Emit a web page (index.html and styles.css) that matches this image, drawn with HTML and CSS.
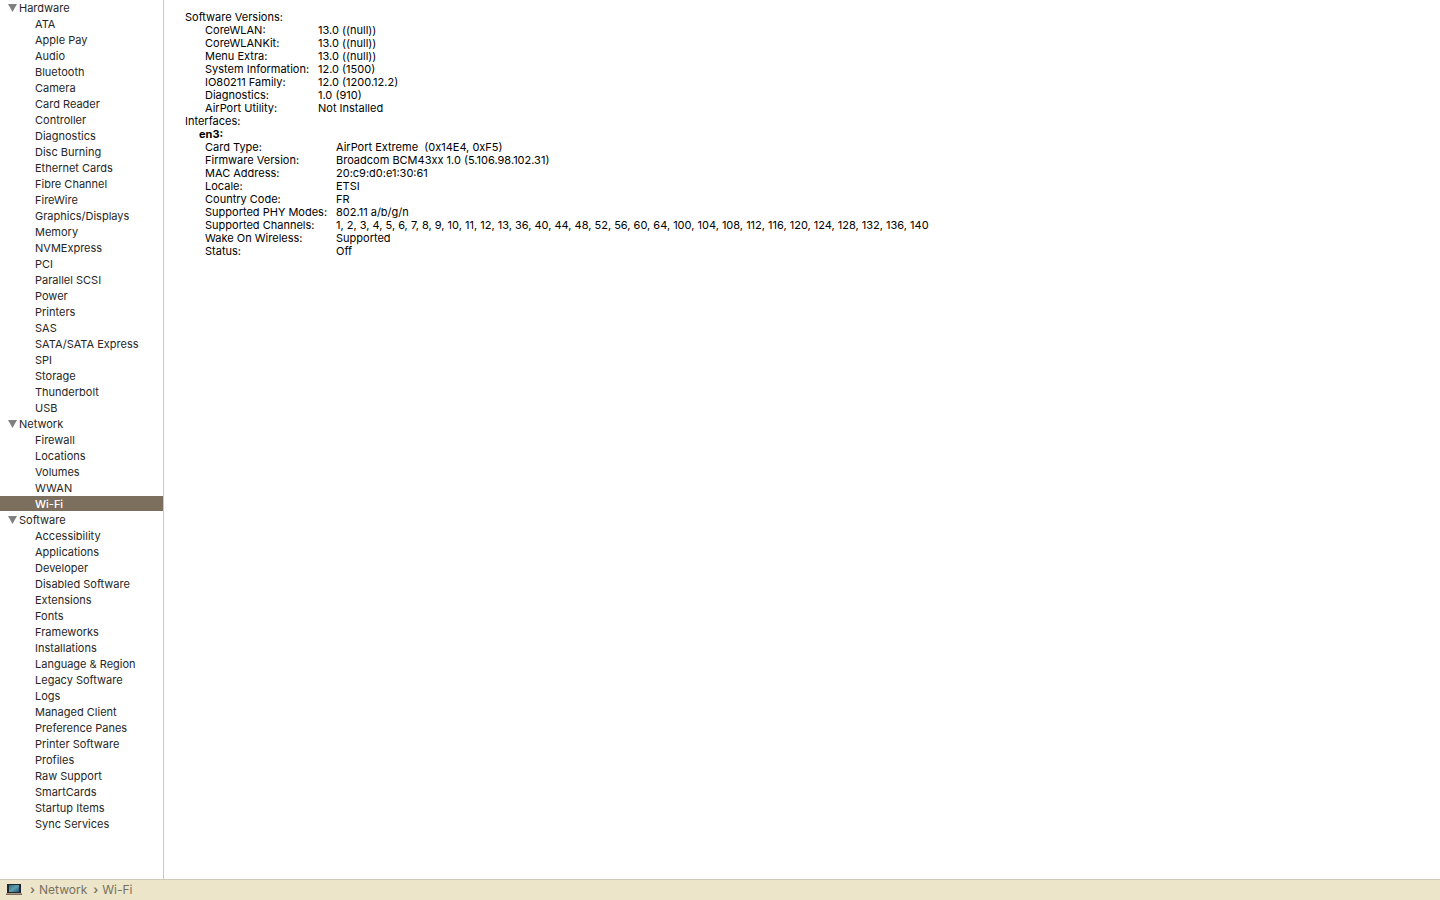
FILE: index.html
```html
<!DOCTYPE html>
<html lang="en">
<head>
    <meta charset="UTF-8">
    <meta name="viewport" content="width=device-width, initial-scale=1.0">
    <title>System Information</title>
    <link rel="stylesheet" href="styles.css">
</head>
<body>
    <div class="main">
        <nav class="sidebar">
            <button type="button" class="group"><svg class="arrow" viewBox="0 0 18 16"><path d="M0 0h18L9 16z"/></svg>Hardware</button>
            <a href="#">ATA</a>
            <a href="#">Apple Pay</a>
            <a href="#">Audio</a>
            <a href="#">Bluetooth</a>
            <a href="#">Camera</a>
            <a href="#">Card Reader</a>
            <a href="#">Controller</a>
            <a href="#">Diagnostics</a>
            <a href="#">Disc Burning</a>
            <a href="#">Ethernet Cards</a>
            <a href="#">Fibre Channel</a>
            <a href="#">FireWire</a>
            <a href="#">Graphics/Displays</a>
            <a href="#">Memory</a>
            <a href="#">NVMExpress</a>
            <a href="#">PCI</a>
            <a href="#">Parallel SCSI</a>
            <a href="#">Power</a>
            <a href="#">Printers</a>
            <a href="#">SAS</a>
            <a href="#">SATA/SATA Express</a>
            <a href="#">SPI</a>
            <a href="#">Storage</a>
            <a href="#">Thunderbolt</a>
            <a href="#">USB</a>
            <button type="button" class="group"><svg class="arrow" viewBox="0 0 18 16"><path d="M0 0h18L9 16z"/></svg>Network</button>
            <a href="#">Firewall</a>
            <a href="#">Locations</a>
            <a href="#">Volumes</a>
            <a href="#">WWAN</a>
            <a href="#" class="selected">Wi-Fi</a>
            <button type="button" class="group"><svg class="arrow" viewBox="0 0 18 16"><path d="M0 0h18L9 16z"/></svg>Software</button>
            <a href="#">Accessibility</a>
            <a href="#">Applications</a>
            <a href="#">Developer</a>
            <a href="#">Disabled Software</a>
            <a href="#">Extensions</a>
            <a href="#">Fonts</a>
            <a href="#">Frameworks</a>
            <a href="#">Installations</a>
            <a href="#">Language &amp; Region</a>
            <a href="#">Legacy Software</a>
            <a href="#">Logs</a>
            <a href="#">Managed Client</a>
            <a href="#">Preference Panes</a>
            <a href="#">Printer Software</a>
            <a href="#">Profiles</a>
            <a href="#">Raw Support</a>
            <a href="#">SmartCards</a>
            <a href="#">Startup Items</a>
            <a href="#">Sync Services</a>
        </nav>

        <main class="details">
            <div>Software Versions:</div>
            <table class="versions">
                <tr><th scope="row">CoreWLAN:</th><td>13.0 ((null))</td></tr>
                <tr><th scope="row">CoreWLANKit:</th><td>13.0 ((null))</td></tr>
                <tr><th scope="row">Menu Extra:</th><td>13.0 ((null))</td></tr>
                <tr><th scope="row">System Information:</th><td>12.0 (1500)</td></tr>
                <tr><th scope="row">IO80211 Family:</th><td>12.0 (1200.12.2)</td></tr>
                <tr><th scope="row">Diagnostics:</th><td>1.0 (910)</td></tr>
                <tr><th scope="row">AirPort Utility:</th><td>Not Installed</td></tr>
            </table>
            <div>Interfaces:</div>
            <div class="interface">en3:</div>
            <table class="interfaces">
                <tr><th scope="row">Card Type:</th><td>AirPort Extreme&nbsp; (0x14E4, 0xF5)</td></tr>
                <tr><th scope="row">Firmware Version:</th><td>Broadcom BCM43xx 1.0 (5.106.98.102.31)</td></tr>
                <tr><th scope="row">MAC Address:</th><td>20:c9:d0:e1:30:61</td></tr>
                <tr><th scope="row">Locale:</th><td>ETSI</td></tr>
                <tr><th scope="row">Country Code:</th><td>FR</td></tr>
                <tr><th scope="row">Supported PHY Modes:</th><td>802.11 a/b/g/n</td></tr>
                <tr><th scope="row">Supported Channels:</th><td>1, 2, 3, 4, 5, 6, 7, 8, 9, 10, 11, 12, 13, 36, 40, 44, 48, 52, 56, 60, 64, 100, 104, 108, 112, 116, 120, 124, 128, 132, 136, 140</td></tr>
                <tr><th scope="row">Wake On Wireless:</th><td>Supported</td></tr>
                <tr><th scope="row">Status:</th><td>Off</td></tr>
            </table>
        </main>
    </div>

    <footer class="pathbar">
        <svg class="computer" viewBox="0 0 16 12">
            <defs>
                <linearGradient id="screen" x1="0" y1="0" x2="1" y2="1">
                    <stop offset="0" stop-color="#2f6a8c"/>
                    <stop offset="0.5" stop-color="#5c9fac"/>
                    <stop offset="1" stop-color="#1f557c"/>
                </linearGradient>
            </defs>
            <path fill="#23262b" d="M1 0h14v9H1z"/>
            <path fill="url(#screen)" d="M3 1h10v7H3z"/>
            <path fill="#a89a86" d="M0 9h16v2H0z"/>
            <path fill="#7a6c5c" d="M0 10h16v1H0z"/>
        </svg>
        <span class="chevron">›</span>
        <a href="#">Network</a>
        <span class="chevron">›</span>
        <a href="#">Wi-Fi</a>
    </footer>
</body>
</html>
```

FILE: styles.css
```css
body {
    display: flex;
    flex-direction: column;
    min-height: 100vh;
    margin: 0;
    background-color: #fff;
    color: #000;
    font-family: Inter, sans-serif;
    font-size: 11px;
}
a {
    color: inherit;
    text-decoration: none;
}
.main {
    display: flex;
    flex: 1;
}
.sidebar {
    box-sizing: border-box;
    width: 164px;
    flex-shrink: 0;
    border-right: 1px solid #d0c9b8;
    color: #262626;
}
.sidebar a {
    display: block;
    padding-left: 35px;
    line-height: 16px;
}
.sidebar .selected {
    height: 15px;
    margin-bottom: 1px;
    background-color: #7c6f5d;
    color: #fff;
    font-weight: 500;
}
.group {
    display: flex;
    align-items: center;
    gap: 2px;
    width: 100%;
    height: 16px;
    padding: 0 0 0 8px;
    border: none;
    background: none;
    color: inherit;
    font: inherit;
}
.arrow {
    width: 9px;
    height: 8px;
    fill: #808080;
}
.details {
    flex: 1;
    padding: 11px 21px;
    line-height: 13px;
}
table {
    margin-left: 20px;
    border-collapse: collapse;
}
th {
    padding: 0;
    font-weight: normal;
    text-align: left;
}
td {
    padding: 0;
}
.versions th {
    width: 113px;
}
.interfaces th {
    width: 131px;
}
.interface {
    margin-left: 14px;
    font-weight: bold;
}
.pathbar {
    display: flex;
    align-items: center;
    height: 20px;
    padding-left: 6px;
    border-top: 1px solid #d0c9b8;
    background-color: #ece5c9;
    color: #77715f;
    font-size: 12px;
    line-height: 18px;
}
.computer {
    width: 16px;
    height: 12px;
    margin-right: 8px;
}
.chevron {
    width: 9px;
    font-weight: 600;
}
.pathbar a {
    margin-right: 6px;
}
```
